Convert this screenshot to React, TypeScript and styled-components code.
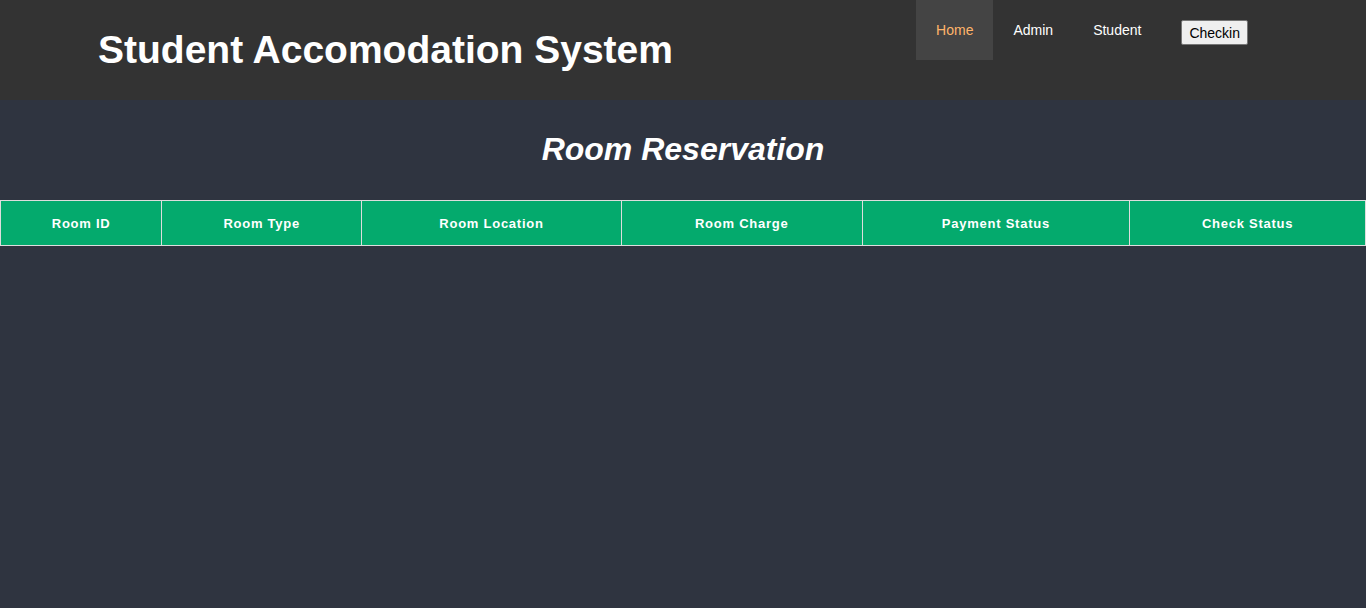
import React from "react";
import styled, { createGlobalStyle } from "styled-components";

const Global = createGlobalStyle`
  html, body { margin: 0; padding: 0; }
  body { background: #2f3440; font-family: "Liberation Sans", Arial, sans-serif; min-height: 608px; }
`;

const Header = styled.header`
  height: 100px;
  background: #333333;
  display: flex;
  justify-content: space-between;
  align-items: flex-start;
`;

const Title = styled.h1`
  margin: 27px 0 0 98px;
  color: #fff;
  font-size: 39px;
  font-weight: bold;
  line-height: 46px;
`;

const Nav = styled.nav`
  display: flex;
  align-items: flex-start;
  margin-right: 98px;
`;

const NavItem = styled.a<{ $active?: boolean }>`
  display: block;
  padding: 22px 20px;
  height: 16px;
  font-size: 14px;
  line-height: 16px;
  color: ${(p) => (p.$active ? "#ffb46a" : "#ffffff")};
  background: ${(p) => (p.$active ? "#444444" : "transparent")};
  text-decoration: none;
`;

const ButtonWrap = styled.div`
  padding: 20px 20px;
`;

const Button = styled.button`
  font-family: "Liberation Sans", Arial, sans-serif;
  font-size: 14px;
  padding: 3px 7px 2px;
  height: 25px;
  background: #efefef;
  color: #000;
  border: 1px solid #767676;
  border-radius: 2px;
`;

const Heading = styled.h2`
  margin: 30px 0 32px;
  text-align: center;
  color: #fff;
  font-size: 32px;
  font-style: italic;
  font-weight: bold;
  line-height: 38px;
`;

const Table = styled.table`
  width: 100%;
  border-collapse: collapse;
`;

const Th = styled.th`
  background: #04aa6d;
  color: #fff;
  border: 1px solid #dddddd;
  height: 44px;
  padding: 0;
  font-size: 13px;
  font-weight: bold;
  letter-spacing: 0.75px;
  text-align: center;
`;

const columns = [
  { label: "Room ID", width: 161 },
  { label: "Room Type", width: 200 },
  { label: "Room Location", width: 260 },
  { label: "Room Charge", width: 241 },
  { label: "Payment Status", width: 268 },
  { label: "Check Status", width: 236 },
];

export default function App() {
  return (
    <>
      <Global />
      <Header>
        <Title>Student Accomodation System</Title>
        <Nav>
          <NavItem $active href="#">Home</NavItem>
          <NavItem href="#">Admin</NavItem>
          <NavItem href="#">Student</NavItem>
          <ButtonWrap>
            <Button>Checkin</Button>
          </ButtonWrap>
        </Nav>
      </Header>
      <Heading>Room Reservation</Heading>
      <Table>
        <thead>
          <tr>
            {columns.map((c) => (
              <Th key={c.label} style={{ width: c.width }}>{c.label}</Th>
            ))}
          </tr>
        </thead>
      </Table>
    </>
  );
}
